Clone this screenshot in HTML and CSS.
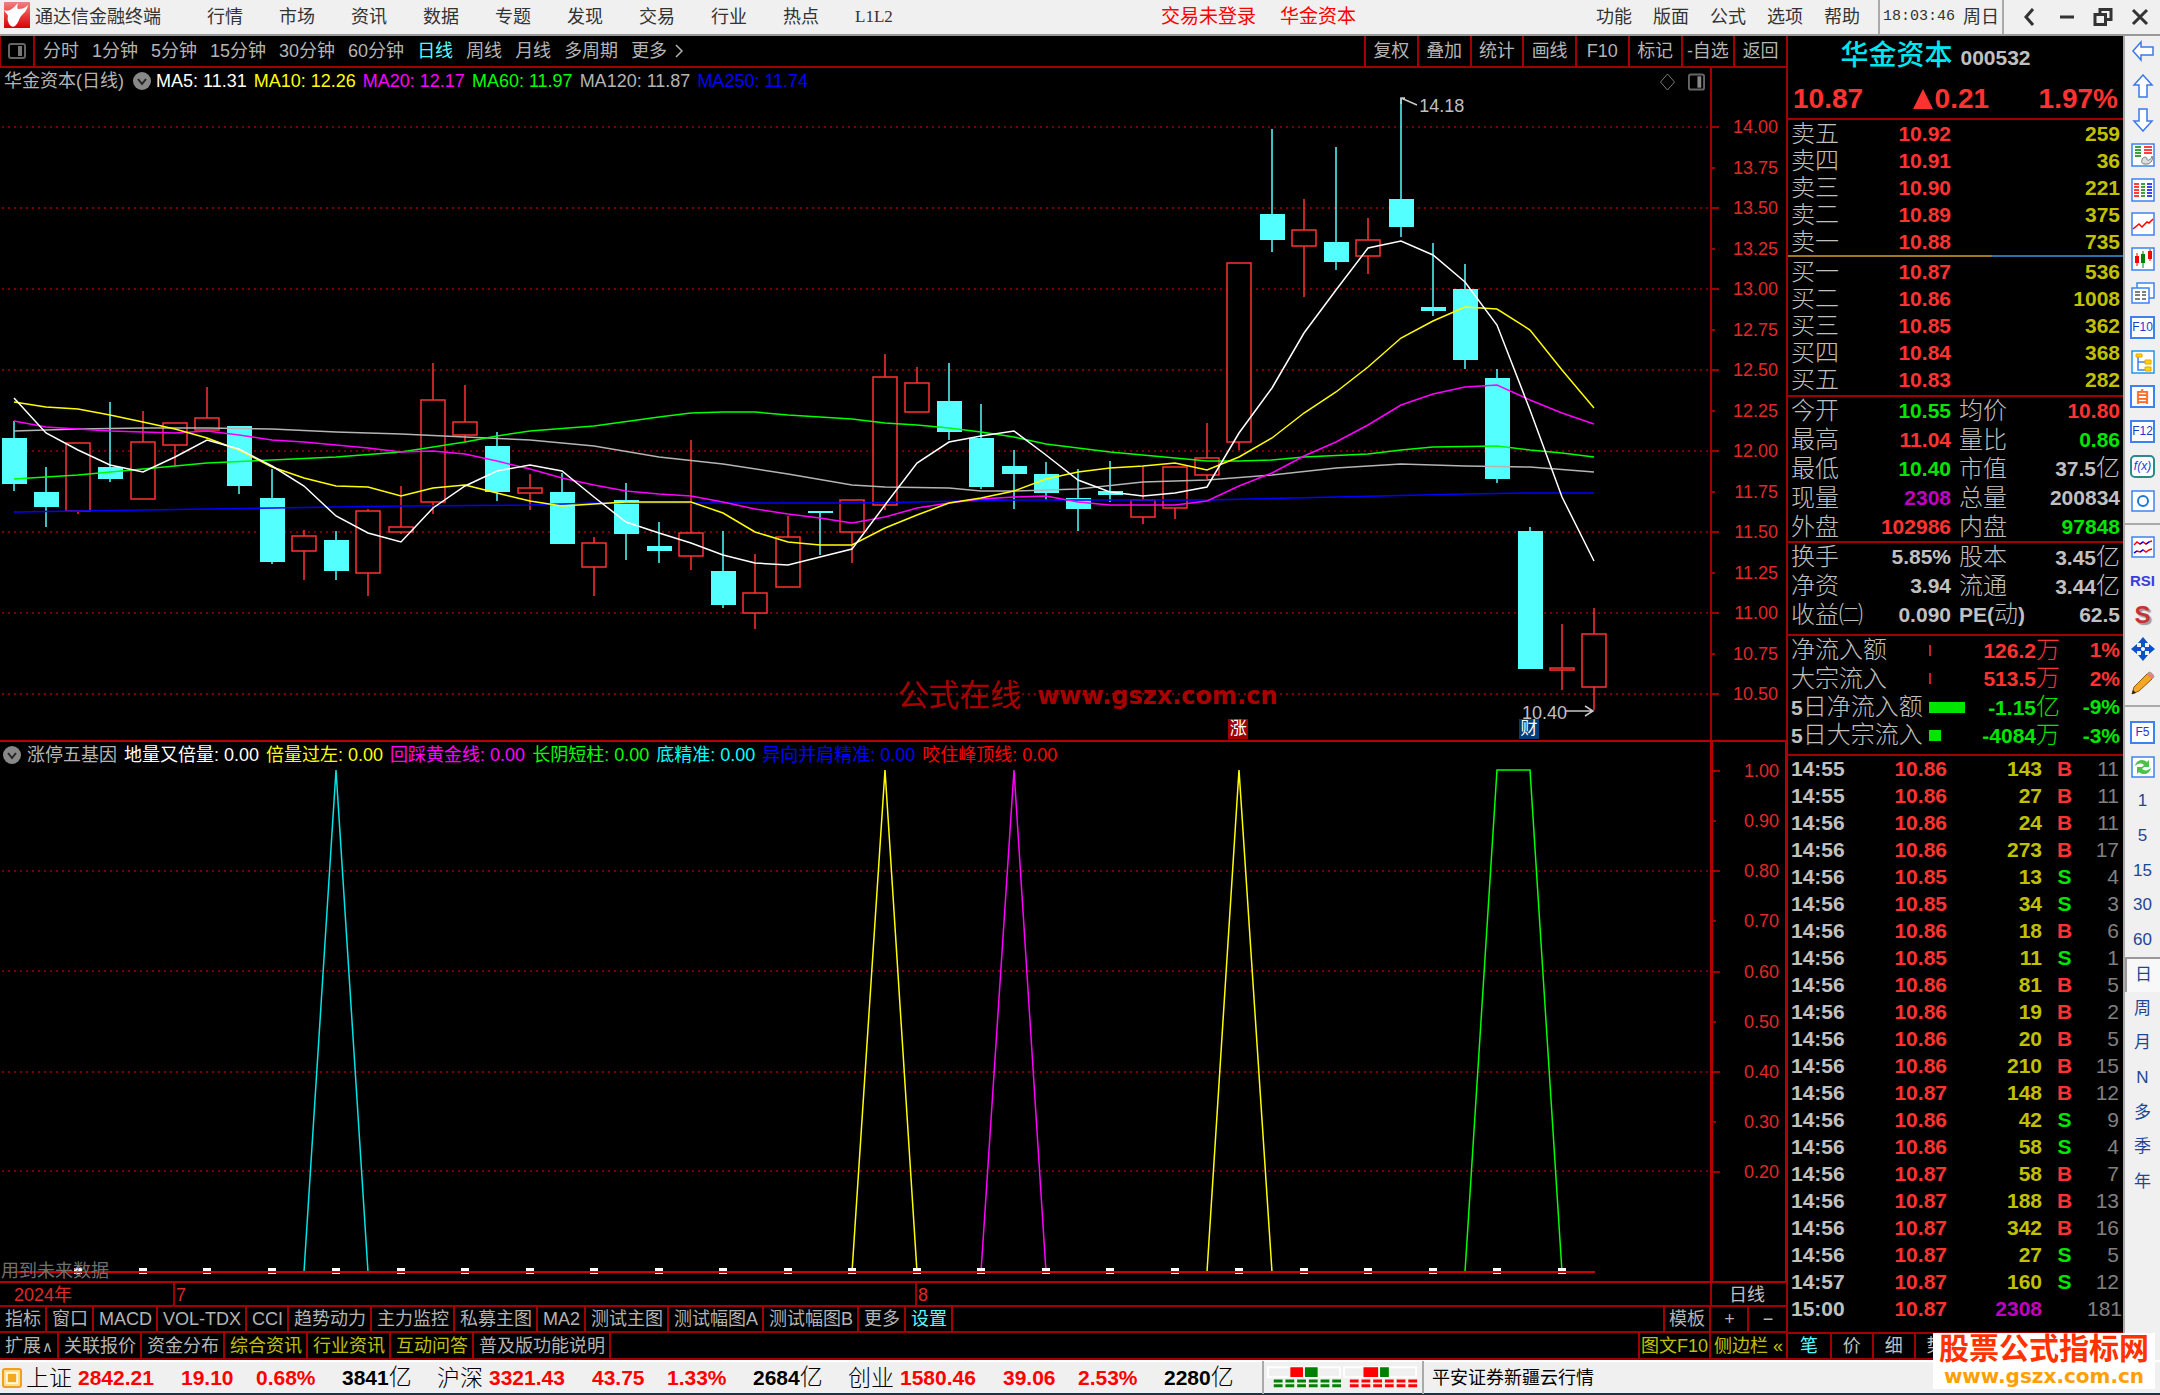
FILE: index.html
```html
<!DOCTYPE html>
<html lang="zh-CN">
<head>
<meta charset="utf-8">
<title>通达信金融终端</title>
<link rel="stylesheet" href="styles.css">
</head>
<body>
<header class="menubar">
  <svg class="logo" viewBox="0 0 26 26"><defs><linearGradient id="lg" x1="0" y1="0" x2="0" y2="1"><stop offset="0" stop-color="#f08080"/><stop offset=".5" stop-color="#e84040"/><stop offset="1" stop-color="#d80000"/></linearGradient></defs><rect width="26" height="26" fill="url(#lg)"/><path d="M0 8c4 2 8 0 14-7-1 4-1 6 1 6 3 0 6-1 9-4-1 6-4 8-7 11-2 3-3 8-6 10-3 2-6-1-7-5-1-3 1-5-1-7-1-1-2-2-3-4z" fill="#fff"/></svg>
  <h1 class="brand">通达信金融终端</h1>
  <nav class="menu">
    <a href="#">行情</a><a href="#">市场</a><a href="#">资讯</a><a href="#">数据</a><a href="#">专题</a><a href="#">发现</a><a href="#">交易</a><a href="#">行业</a><a href="#">热点</a><a href="#" class="serif">L1L2</a>
  </nav>
  <div class="notice"><a href="#">交易未登录</a><a href="#">华金资本</a></div>
  <nav class="menu menu-right"><a href="#">功能</a><a href="#">版面</a><a href="#">公式</a><a href="#">选项</a><a href="#">帮助</a></nav>
  <div class="clock"><time>18:03:46</time><span>周日</span></div>
  <div class="winbtns">
    <button aria-label="后退"><svg viewBox="0 0 20 20"><path d="M13 2L6 10l7 8" fill="none" stroke="#333" stroke-width="3"/></svg></button>
    <button aria-label="最小化"><svg viewBox="0 0 20 20"><path d="M3 10h14" stroke="#333" stroke-width="3"/></svg></button>
    <button aria-label="还原"><svg viewBox="0 0 20 20"><path d="M2 7.500h10.500v10H2zM7 7V2.500h11v10h-5" fill="none" stroke="#333" stroke-width="3"/></svg></button>
    <button aria-label="关闭"><svg viewBox="0 0 20 20"><path d="M3 3l14 14M17 3L3 17" stroke="#333" stroke-width="3"/></svg></button>
  </div>
</header>

<main class="workspace">
  <section class="charts">
    <div class="toolbar">
      <button class="panel-btn" aria-label="面板"><svg viewBox="0 0 18 16"><rect x="1" y="1" width="16" height="14" rx="2" fill="none" stroke="#666" stroke-width="2"/><rect x="10" y="3" width="4" height="10" fill="#777"/></svg></button>
      <div class="periods">
        <button>分时</button><button>1分钟</button><button>5分钟</button><button>15分钟</button><button>30分钟</button><button>60分钟</button><button class="on">日线</button><button>周线</button><button>月线</button><button>多周期</button><button class="more">更多<svg viewBox="0 0 8 14"><path d="M1 1l6 6-6 6" fill="none" stroke="#b4b4b4" stroke-width="1.500"/></svg></button>
      </div>
      <div class="tools"><button>复权</button><button>叠加</button><button>统计</button><button>画线</button><button>F10</button><button>标记</button><button>-自选</button><button>返回</button></div>
    </div>

    <div class="pane price-pane">
      <div class="plot">
        <svg class="canvas" id="price-plot" viewBox="0 68 1710 672" preserveAspectRatio="none"></svg>
        <div class="legend">
          <span class="c-gray">华金资本(日线)</span>
          <svg class="drop" viewBox="0 0 18 18"><circle cx="9" cy="9" r="9" fill="#888"/><path d="M5 7l4 5 4-5" fill="none" stroke="#222" stroke-width="2"/></svg>
          <span class="c-white">MA5: 11.31</span><span class="c-yellow">MA10: 12.26</span><span class="c-magenta">MA20: 12.17</span><span class="c-green">MA60: 11.97</span><span class="c-gray">MA120: 11.87</span><span class="c-blue">MA250: 11.74</span>
        </div>
        <div class="corner">
          <svg viewBox="0 0 16 18"><path d="M8 1l7 8-7 8-7-8z" fill="none" stroke="#777"/></svg>
          <svg viewBox="0 0 18 18"><rect x="1" y="1" width="16" height="16" rx="2" fill="none" stroke="#666" stroke-width="2"/><rect x="10" y="3" width="4" height="12" fill="#888"/></svg>
        </div>
        <span class="mark mark-high">14.18</span>
        <span class="mark mark-low">10.40</span>
        <span class="tag tag-rise">涨</span>
        <span class="tag tag-fin">财</span>
        <div class="site"><span>公式在线</span><b>www.gszx.com.cn</b></div>
      </div>
      <ol class="axis">
        <li>14.00</li><li>13.75</li><li>13.50</li><li>13.25</li><li>13.00</li><li>12.75</li><li>12.50</li><li>12.25</li><li>12.00</li><li>11.75</li><li>11.50</li><li>11.25</li><li>11.00</li><li>10.75</li><li>10.50</li>
      </ol>
    </div>

    <div class="pane sub-pane">
      <div class="plot">
        <svg class="canvas" id="sub-plot" viewBox="0 742 1710 539" preserveAspectRatio="none"></svg>
        <div class="legend sub-legend">
          <svg class="drop" viewBox="0 0 18 18"><circle cx="9" cy="9" r="9" fill="#888"/><path d="M5 7l4 5 4-5" fill="none" stroke="#222" stroke-width="2"/></svg>
          <span class="c-gray">涨停五基因</span><span class="c-white">地量又倍量: 0.00</span><span class="c-yellow">倍量过左: 0.00</span><span class="c-magenta">回踩黄金线: 0.00</span><span class="c-green">长阴短柱: 0.00</span><span class="c-cyan">底精准: 0.00</span><span class="c-blue">异向并肩精准: 0.00</span><span class="c-red">咬住峰顶线: 0.00</span>
        </div>
        <span class="future">用到未来数据</span>
      </div>
      <ol class="axis sub-axis">
        <li>1.00</li><li>0.90</li><li>0.80</li><li>0.70</li><li>0.60</li><li>0.50</li><li>0.40</li><li>0.30</li><li>0.20</li>
      </ol>
    </div>

    <div class="dates">
      <span class="d-year">2024年</span><span class="d-jul">7</span><span class="d-aug">8</span><span class="d-type">日线</span>
    </div>
    <div class="tabs">
      <button>指标</button><button>窗口</button><button>MACD</button><button>VOL-TDX</button><button>CCI</button><button>趋势动力</button><button>主力监控</button><button>私募主图</button><button>MA2</button><button>测试主图</button><button>测试幅图A</button><button>测试幅图B</button><button>更多</button><button class="on">设置</button>
      <button class="tail">模板</button><button class="zoom">+</button><button class="zoom last">−</button>
    </div>
    <div class="tabs tabs2">
      <button>扩展<small>∧</small></button><button>关联报价</button><button>资金分布</button><button class="hot">综合资讯</button><button class="hot">行业资讯</button><button class="hot">互动问答</button><button>普及版功能说明</button>
      <button class="tail hot f10">图文F10</button><button class="hot side-toggle">侧边栏&nbsp;«</button>
    </div>
  </section>

  <aside class="quote">
    <div class="q-head">
      <h2><b>华金资本</b><span>000532</span></h2>
      <p><span>10.87</span><span class="delta"><svg viewBox="0 0 20 20"><path d="M10 0l10 20H0z" fill="#ff3232"/></svg>0.21</span><span>1.97%</span></p>
    </div>
    <table class="book asks">
      <tr><th>卖五</th><td class="r">10.92</td><td>259</td></tr>
      <tr><th>卖四</th><td class="r">10.91</td><td>36</td></tr>
      <tr><th>卖三</th><td class="r">10.90</td><td>221</td></tr>
      <tr><th>卖二</th><td class="r">10.89</td><td>375</td></tr>
      <tr><th>卖一</th><td class="r">10.88</td><td>735</td></tr>
    </table>
    <div class="ratio"></div>
    <table class="book bids">
      <tr><th>买一</th><td class="r">10.87</td><td>536</td></tr>
      <tr><th>买二</th><td class="r">10.86</td><td>1008</td></tr>
      <tr><th>买三</th><td class="r">10.85</td><td>362</td></tr>
      <tr><th>买四</th><td class="r">10.84</td><td>368</td></tr>
      <tr><th>买五</th><td class="r">10.83</td><td>282</td></tr>
    </table>
    <table class="facts">
      <tr><th>今开</th><td class="g">10.55</td><th>均价</th><td class="r">10.80</td></tr>
      <tr><th>最高</th><td class="r">11.04</td><th>量比</th><td class="g">0.86</td></tr>
      <tr><th>最低</th><td class="g">10.40</td><th>市值</th><td>37.5<i>亿</i></td></tr>
      <tr><th>现量</th><td class="m">2308</td><th>总量</th><td>200834</td></tr>
      <tr><th>外盘</th><td class="r">102986</td><th>内盘</th><td class="g">97848</td></tr>
    </table>
    <table class="facts facts2">
      <tr><th>换手</th><td>5.85%</td><th>股本</th><td>3.45<i>亿</i></td></tr>
      <tr><th>净资</th><td>3.94</td><th>流通</th><td>3.44<i>亿</i></td></tr>
      <tr><th>收益㈡</th><td>0.090</td><th><b>PE(</b>动<b>)</b></th><td>62.5</td></tr>
    </table>
    <table class="flow">
      <tr><th>净流入额</th><td class="bar"><span class="thin"></span></td><td class="r">126.2<i>万</i></td><td class="r">1%</td></tr>
      <tr><th>大宗流入</th><td class="bar"><span class="thin"></span></td><td class="r">513.5<i>万</i></td><td class="r">2%</td></tr>
      <tr><th><b>5</b>日净流入额</th><td class="bar"><span class="wide"></span></td><td class="g">-1.15<i>亿</i></td><td class="g">-9%</td></tr>
      <tr><th><b>5</b>日大宗流入</th><td class="bar"><span class="mid"></span></td><td class="g">-4084<i>万</i></td><td class="g">-3%</td></tr>
    </table>
    <table class="trades"><tbody id="trades"></tbody></table>
    <div class="q-tabs"><button class="on">笔</button><button>价</button><button>细</button><button>势</button><button></button><button></button><button></button><button></button></div>
  </aside>

  <nav class="rail">
    <div class="rail-group g14">
      <button aria-label="左"><svg viewBox="0 0 24 24"><path d="M2 12l8-9v5h12v8H10v5z" fill="#fff" stroke="#3c78e6" stroke-width="1.500"/></svg></button>
      <button aria-label="上"><svg viewBox="0 0 24 24"><path d="M12 1l9 10h-5v12H8V11H3z" fill="#fff" stroke="#3c78e6" stroke-width="1.500"/></svg></button>
      <button aria-label="下"><svg viewBox="0 0 24 24"><path d="M12 23l9-10h-5V1H8v12H3z" fill="#fff" stroke="#3c78e6" stroke-width="1.500"/></svg></button>
      <button aria-label="报价"><svg viewBox="0 0 24 24"><path d="M1 1h22v22H1z" fill="#fff" stroke="#3c82f0" stroke-width="1.500"/><path d="M4 4h6M4 7h6M4 10h6M4 13h6" stroke="#008000" stroke-width="1.500"/><path d="M13 4h8M13 7h8M13 10h8" stroke="#f00" stroke-width="1.500"/><path d="M11 17c0-3 5-4 5-1s5 0 5-3c2 5-3 9-7 8-3 0-4-2-3-4z" fill="#ddd" stroke="#777"/></svg></button>
      <button aria-label="列表"><svg viewBox="0 0 24 24"><path d="M1 1h22v22H1z" fill="#fff" stroke="#3c82f0" stroke-width="1.500"/><path d="M3 6h5M3 9h5M3 12h5M3 15h5M3 18h5" stroke="#f00" stroke-width="1.500"/><path d="M10 6h4M10 9h4M10 12h4M10 15h4M10 18h4" stroke="#008000" stroke-width="1.500"/><path d="M16 6h5M16 9h5M16 12h5M16 15h5M16 18h5" stroke="#00f" stroke-width="1.500"/></svg></button>
      <button aria-label="走势"><svg viewBox="0 0 24 24"><path d="M1 1h22v22H1z" fill="#fff" stroke="#3c82f0" stroke-width="1.500"/><path d="M2 17l6-5 3 3 5-5 2 1 4-4" fill="none" stroke="#f00" stroke-width="1.500"/></svg></button>
      <button aria-label="K线"><svg viewBox="0 0 24 24"><path d="M1 1h22v22H1z" fill="#fff" stroke="#3c82f0" stroke-width="1.500"/><path d="M4 9h4v7H4zM17 4h4v8h-4z" fill="#f00"/><path d="M10 7h4v9h-4z" fill="#008000"/><path d="M6 6v13M19 2v12" stroke="#f00"/><path d="M12 4v17" stroke="#008000"/></svg></button>
      <button aria-label="多窗"><svg viewBox="0 0 24 24"><path d="M6 2h17v15H6z" fill="#fff" stroke="#3c82f0" stroke-width="1.500"/><path d="M1 7h17v15H1z" fill="#fff" stroke="#3c82f0" stroke-width="1.500"/><path d="M4 11h5M11 11h4M4 14h5M11 14h4M4 18h5M11 18h4" stroke="#555" stroke-width="1.500"/></svg></button>
      <button><span class="key">F10</span></button>
      <button aria-label="树"><svg viewBox="0 0 24 24"><path d="M1 1h22v22H1z" fill="#fff" stroke="#1e96e6" stroke-width="1.500"/><path d="M7 7v13h7M7 12h7" fill="none" stroke="#3c82f0" stroke-width="1.500"/><path d="M5 4h6v3H5zM14 10h6v4h-6zM14 17h6v4h-6z" fill="#ffd700" stroke="#f0a000"/></svg></button>
      <button><span class="key self">自</span></button>
      <button><span class="key">F12</span></button>
      <button><span class="key fx">f(x)</span></button>
      <button aria-label="圆"><svg viewBox="0 0 24 24"><path d="M1 2h22v20H1z" fill="#fff" stroke="#3c82f0" stroke-width="1.500"/><circle cx="12" cy="12" r="5" fill="none" stroke="#1e78dc" stroke-width="2"/></svg></button>
    </div>
    <div class="rail-group g5">
      <button aria-label="指标"><svg viewBox="0 0 24 24"><path d="M1 2h22v20H1z" fill="#fff" stroke="#3c82f0" stroke-width="1.500"/><path d="M3 10l3-3 3 2 3-2 3 2 3-2 3-1M3 18l3-2 3 1 3-2 3 2 3-2 3-1" fill="none" stroke="#f00" stroke-width="1.500"/><path d="M9 9l3-2M15 9l3-2M9 17l3-2M3 18l3-2" stroke="#00f" stroke-width="1.500"/></svg></button>
      <button><span class="rsi">RSI</span></button>
      <button><span class="dollar">S</span></button>
      <button aria-label="移动"><svg viewBox="0 0 24 24"><path d="M12 0l5 6h-3v4h4V7l6 5-6 5v-3h-4v4h3l-5 6-5-6h3v-4H6v3l-6-5 6-5v3h4V6H7z" fill="#0a50c8"/><circle cx="12" cy="12" r="2" fill="#fff"/></svg></button>
      <button aria-label="画笔"><svg viewBox="0 0 24 24"><path d="M1 23l2-7L16 3l5 5L8 20z" fill="#f5a623" stroke="#8a5a10"/><path d="M1 23l1-4 3 3z" fill="#222"/><path d="M16 3l2-2c2 0 5 3 5 5l-2 2z" fill="#f08080" stroke="#999"/></svg></button>
    </div>
    <div class="rail-group g14 last-group">
      <button><span class="key">F5</span></button>
      <button aria-label="刷新"><svg viewBox="0 0 24 24"><path d="M1 2h22v20H1z" fill="#fff" stroke="#3c82f0" stroke-width="1.500"/><path d="M4 11c1-6 8-8 12-4l2-2v7h-7l2-2c-3-2-5-2-9 1zM20 13c-1 6-8 8-12 4l-2 2v-7h7l-2 2c3 2 5 2 9-1z" fill="#4cc24c"/></svg></button>
      <button>1</button><button>5</button><button>15</button><button>30</button><button>60</button><button class="pressed">日</button><button>周</button><button>月</button><button>N</button><button>多</button><button>季</button><button>年</button>
    </div>
  </nav>
</main>

<footer class="status">
  <svg class="coin" viewBox="0 0 20 20"><rect x="1" y="1" width="18" height="18" rx="2" fill="#ffe08c" stroke="#f0a01e" stroke-width="2"/><rect x="5" y="5" width="10" height="10" fill="#f5a81e" stroke="#fff" stroke-width="1.500"/></svg>
  <dl class="index"><dt>上证</dt><dd>2842.21</dd><dd>19.10</dd><dd>0.68%</dd><dd class="amt">3841<i>亿</i></dd></dl>
  <dl class="index"><dt>沪深</dt><dd>3321.43</dd><dd>43.75</dd><dd>1.33%</dd><dd class="amt">2684<i>亿</i></dd></dl>
  <dl class="index"><dt>创业</dt><dd>1580.46</dd><dd>39.06</dd><dd>2.53%</dd><dd class="amt">2280<i>亿</i></dd></dl>
  <svg class="meter" viewBox="0 0 162 33"><path d="M4 6h74v10H4zM82 6h74v10H82z" fill="#f0f0f0" stroke="#fff" stroke-width="2"/><path d="M27 6h13v10H27zM102 6h15v10h-15z" fill="#f00"/><path d="M42 6h13v10H42zM119 6h9v10h-9z" fill="#008000"/><path d="M10 20h70M10 25h70" stroke="#008000" stroke-width="3" stroke-dasharray="9 3"/><path d="M88 20h70M88 25h70" stroke="#f00" stroke-width="3" stroke-dasharray="9 3"/></svg>
  <span class="server">平安证券新疆云行情</span>
</footer>
<div class="stamp"><strong>股票公式指标网</strong><span>www.gszx.com.cn</span></div>
<script src="script.js"></script>
</body>
</html>
```
FILE: styles.css
```css
* { box-sizing: border-box; }
body {
  margin: 0;
  min-height: 100vh;
  display: flex;
  flex-direction: column;
  position: relative;
  background: #000;
  color: #c0c0c0;
  font: 18px/20px "Liberation Sans", "Noto Sans CJK SC", sans-serif;
  white-space: nowrap;
}
button { margin: 0; padding: 0; border: 0; background: none; color: inherit; font: inherit; white-space: nowrap; }
a { color: inherit; text-decoration: none; }
ol, dl, dd, h1, h2, p { margin: 0; padding: 0; list-style: none; font: inherit; }
table { border-collapse: collapse; width: 100%; table-layout: fixed; }
th, td { padding: 0; }
i { font-style: normal; font-weight: 300; font-size: 24px; }

/* menu bar */
.menubar { flex: none; height: 36px; display: flex; align-items: center; background: #f0f0f0; color: #333; border-bottom: 2px solid #999; }
.logo { width: 26px; height: 26px; margin: 0 5px 4px 4px; }
.brand { width: 172px; }
.menu { display: flex; gap: 36px; }
.serif { font-family: "Liberation Serif", serif; font-size: 17px; }
.notice { display: flex; gap: 24px; color: #f00; margin: 0 auto; padding-left: 28px; font-size: 19px; }
.menu-right { gap: 21px; }
.clock { align-self: stretch; display: flex; align-items: center; gap: 8px; width: 126px; margin-left: 18px; padding-left: 3px; border-left: 2px solid #aaa; border-right: 2px solid #aaa; }
.clock time { font: 15px/20px "Liberation Mono", monospace; }
.winbtns { display: grid; grid-template-columns: repeat(4, 1fr); width: 156px; padding: 0 2px 0 8px; }
.winbtns button { display: grid; place-items: center; }
.winbtns svg { width: 20px; height: 20px; }

/* workspace */
.workspace { flex: 1; display: grid; grid-template-columns: minmax(0, 1fr) 335px 37px; }
.charts { display: flex; flex-direction: column; }
.toolbar { flex: none; height: 32px; display: flex; align-items: stretch; border-bottom: 2px solid #a00000; }
.panel-btn { width: 35px; border: solid #a00000; border-width: 0 2px 0 1px; display: grid; place-items: center; }
.panel-btn svg { width: 18px; height: 16px; }
.periods { display: flex; gap: 13px; padding-left: 8px; flex: 1; color: #b4b4b4; }
.periods .on, .tabs .on, .q-tabs .on { color: #54ffff; }
.more { display: flex; align-items: center; gap: 8px; }
.more svg { width: 8px; height: 14px; }
.tools { display: grid; grid-template-columns: repeat(8, 1fr); width: 424px; color: #b4b4b4; border-right: 2px solid #a00000; }
.tools button { border-left: 2px solid #a00000; }

.pane { display: grid; grid-template-columns: minmax(0, 1fr) 78px; min-height: 300px; }
.price-pane { flex: 672 1 0; }
.sub-pane { flex: 539 1 0; border-top: 2px solid #b40000; border-bottom: 2px solid #b40000; }
.plot { position: relative; }
.canvas { position: absolute; inset: 0; width: 100%; height: 100%; }
.legend { position: absolute; left: 4px; top: 3px; display: flex; align-items: center; gap: 7px; }
.legend .drop { width: 18px; height: 18px; margin: 0 -2px 0 2px; }
.sub-legend { left: 3px; top: 3px; gap: 7px; }
.sub-legend .drop { margin: 0 -1px 0 0; }
.corner { position: absolute; right: 5px; top: 5px; display: flex; gap: 12px; }
.corner svg { height: 18px; width: 17px; }
.axis { display: flex; flex-direction: column; justify-content: space-between; padding: 49px 8px 36px 0; border-left: 2px solid #a00000; border-right: 2px solid #a00000; color: #e02828; }
.axis li { display: flex; align-items: center; justify-content: space-between; }
.axis li::before { content: ""; width: 7px; height: 2px; background: #a00000; }
.axis li:nth-child(even)::before { width: 3px; }
.sub-axis { padding: 19px 6px 99px 0; border-color: #b40000; border-width: 3px; border-style: none solid; }
.mark { position: absolute; }
.mark-high { left: 83%; top: 28px; }
.mark-low { left: 89%; bottom: 17px; }
.tag { position: absolute; bottom: 1px; width: 20px; height: 20px; color: #fff; font-size: 17px; text-align: center; }
.tag-rise { left: 72%; margin-left: -3px; background: #a00000; }
.tag-fin { left: 89%; margin-left: -3px; background: #003c78; }
.site { position: absolute; left: 52%; bottom: 26px; display: flex; align-items: center; gap: 16px; margin-left: 8px; color: #a80000; font-size: 31px; line-height: 36px; }
.site b { font: bold 24px/36px "DejaVu Sans", sans-serif; }
.future { position: absolute; left: 1px; bottom: 0; color: #707070; }

.c-gray { color: #b4b4b4; } .c-white { color: #fff; } .c-yellow { color: #ff0; } .c-magenta { color: #f0f; }
.c-green { color: #0f0; } .c-cyan { color: #0ff; } .c-blue { color: #00f; } .c-red { color: #f00; }

.dates { flex: none; height: 24px; display: flex; line-height: 24px; border-bottom: 2px solid #a00000; color: #e02828; }
.d-year { width: 173px; padding-left: 14px; }
.d-jul, .d-aug { border-left: 2px solid #a00000; width: 742px; padding-left: 1px; }
.d-aug { flex: 1; }
.d-type { width: 78px; padding: 0 17px; border-left: 2px solid #a00000; border-right: 2px solid #a00000; color: #c0c0c0; }
.tabs { flex: none; height: 26px; display: flex; line-height: 24px; border-bottom: 2px solid #a00000; color: #b4b4b4; }
.tabs button { border-right: 2px solid #a00000; padding: 0 4px 0 5px; }
.tabs small { font: 15px/20px "DejaVu Sans", sans-serif; padding-left: 1px; }
.tabs .tail { margin-left: auto; border-left: 2px solid #a00000; padding: 0 4px; }
.tabs .zoom { width: 38px; }
.tabs .last { width: 39px; }
.tabs2 { height: 27px; line-height: 26px; }
.tabs .hot { color: #c0c000; }
.tabs .f10 { padding: 0 1px; }
.tabs .side-toggle { width: 77px; padding: 0; }

/* quote panel */
.quote { display: flex; flex-direction: column; font-size: 21px; font-weight: bold; }
.quote th { font-size: 24px; font-weight: 300; text-align: left; padding-left: 3px; }
.quote th b { font-size: 21px; font-weight: 700; }
.quote td { text-align: right; padding-right: 3px; }
.quote tr { height: 27px; line-height: 26px; }
.q-head { height: 82px; padding: 0 5px; }
.q-head h2 { display: flex; justify-content: center; align-items: baseline; gap: 8px; line-height: 40px; padding-right: 40px; }
.q-head h2 b { color: #00e6f0; font-size: 28px; font-weight: 500; }
.q-head p { display: flex; justify-content: space-between; align-items: center; color: #ff3232; font-size: 28px; line-height: 42px; }
.delta { display: flex; align-items: center; gap: 2px; }
.delta svg { width: 20px; height: 20px; }
.book, .facts, .flow, .trades { border-top: 2px solid #a00000; }
.book td { color: #c0c000; }
.book td:nth-child(2) { padding-right: 0; width: 93px; }
.book th { width: 70px; }
.book th, .book td { padding-top: 2px; line-height: 24px; }
.asks { height: 137px; }
.bids { height: 136px; border-top: 0; margin-bottom: 2px; }
.ratio { height: 2px; background: linear-gradient(to right, #a07820 61%, #2870a8 61%); }
.facts { height: 146px; }
.facts th { width: 72px; }
.facts td:nth-child(2) { width: 91px; padding-right: 0; }
.facts th:nth-child(3) { padding-left: 8px; }
.facts2 { height: 88px; margin-bottom: 5px; }
.flow { height: 116px; margin-bottom: 4px; }
.flow th { width: 141px; }
.flow .bar { width: 37px; padding: 0; }
.bar span { display: block; height: 11px; background: #00e600; }
.bar .thin { width: 2px; background: #c82020; }
.bar .wide { width: 36px; }
.bar .mid { width: 12px; }
.flow td:nth-child(3) { width: 94px; padding-right: 0; }
.quote .r { color: #ff3232; } .quote .g { color: #00e600; } .quote .m { color: #c000c0; }
.quote .y { color: #c0c000; }
.trades { margin-bottom: auto; }
.trades td { padding-right: 0; }
.trades td:nth-child(1) { width: 57px; text-align: left; padding-left: 3px; }
.trades td:nth-child(2) { width: 102px; }
.trades td:nth-child(3) { width: 95px; }
.trades td:nth-child(4) { width: 45px; text-align: center; }
.trades td:nth-child(5) { color: #808080; font-weight: normal; padding-right: 4px; }
.q-tabs { height: 28px; display: grid; grid-template-columns: repeat(8, 1fr); border-top: 2px solid #a00000; border-bottom: 2px solid #a00000; font-size: 18px; font-weight: normal; line-height: 24px; }
.q-tabs button + button { border-left: 2px solid #a00000; }

/* icon rail */
.rail { background: #f0f0f0; border-left: 2px solid #aaa; color: #1e4696; font-size: 17px; }
.rail-group { display: grid; grid-auto-rows: 1fr; }
.g14 { height: 484px; margin-top: -2px; }
.g5 { height: 184px; margin-top: 5px; padding: 5px 0; border-top: 2px solid #aaa; border-bottom: 2px solid #aaa; }
.last-group { margin-top: 8px; }
.rail button { display: grid; place-items: center; }
.rail svg { width: 24px; height: 24px; }
.key { width: 25px; height: 23px; border: 2px solid #3c82f0; background: #fff; color: #1e3cc8; font-size: 12px; line-height: 19px; text-align: center; }
.self { color: #ff6a28; font-size: 15px; font-weight: bold; }
.fx { border-color: #2a8a8a; border-radius: 5px; font-style: italic; }
.rsi { color: #3c3cdc; font-size: 15px; font-weight: bold; }
.dollar { color: #c83232; font-size: 24px; font-weight: bold; text-shadow: 2px 2px 1px #999; }
.rail .pressed { background: #f8f8f8; border-top: 2px solid #999; border-left: 2px solid #999; }

/* status bar */
.status { flex: none; height: 35px; display: flex; align-items: center; background: #f0f0f0; color: #000; border-top: 2px solid #fff; border-bottom: 2px solid #1e3246; }
.coin { width: 20px; height: 20px; margin: 0 4px 0 2px; }
.index { display: grid; grid-template-columns: 52px 103px 75px 86px 95px; align-items: center; font-size: 21px; font-weight: bold; color: #f00; line-height: 28px; }
.index dt { font-size: 23px; font-weight: 300; color: #000; }
.amt { color: #000; }
.amt i { font-size: 23px; }
.meter { width: 162px; height: 33px; margin-left: 3px; border-left: 2px solid #aaa; border-right: 2px solid #aaa; }
.server { padding-left: 8px; }
.stamp { position: absolute; right: 5px; bottom: 6px; width: 222px; height: 56px; background: #fff; display: flex; flex-direction: column; align-items: center; }
.stamp strong { color: #ff3200; font-size: 30px; line-height: 32px; font-weight: bold; }
.stamp span { color: #ffa000; font: bold 20px/22px "DejaVu Sans", sans-serif; }
```
FILE: script.js
```js
const NS = 'http://www.w3.org/2000/svg';
const cx = i => Math.round(13.5 + 32.26 * i);

function add(svg, tag, attrs) {
  const el = document.createElementNS(NS, tag);
  for (const k in attrs) el.setAttribute(k, attrs[k]);
  svg.appendChild(el);
}
function grid(svg, rows) {
  rows.forEach(y => add(svg, 'path', { d: `M2 ${y}H1710`, stroke: '#780000', 'stroke-width': 2, 'stroke-dasharray': '2 4' }));
}
function line(svg, pts, color) {
  add(svg, 'polyline', { points: pts.map(p => cx(p[0]) + ',' + p[1]).join(' '), fill: 'none', stroke: color, 'stroke-width': 1.5 });
}

// each candle: direction (u/d), high, body top, body bottom, low, in plot units
const candles = [
  ['d',421,438,484,491],['d',467,492,507,527],['u',443,443,511,514],['d',402,467,479,482],['u',411,442,499,499],
  ['u',423,423,445,466],['u',387,418,430,430],['d',426,426,486,494],['d',469,498,562,564],['u',530,536,551,580],
  ['d',531,540,571,580],['u',509,511,573,596],['u',486,527,532,534],['u',363,400,502,514],['u',385,422,435,442],
  ['d',432,446,492,501],['u',474,488,493,510],['d',473,492,544,544],['u',537,543,567,596],['d',483,500,534,560],
  ['d',522,546,551,563],['u',440,533,556,570],['d',531,571,605,608],['u',554,593,613,629],['u',516,537,587,587],
  ['d',512,511,513,555],['u',500,500,532,563],['u',354,377,505,510],['u',367,383,412,412],['d',363,401,432,440],
  ['d',404,438,487,489],['d',450,466,474,509],['d',462,474,493,500],['d',469,498,509,531],['d',461,491,495,502],
  ['u',466,500,517,524],['u',467,467,508,519],['u',423,458,475,479],['u',263,263,442,450],['d',129,214,240,252],
  ['u',199,230,246,297],['d',147,242,262,270],['u',218,240,256,274],['d',98,199,227,237],['d',243,307,311,316],
  ['d',264,289,360,369],['d',369,378,479,483],['d',527,531,669,669],['u',624,668,670,690],['u',608,634,687,710]
];

const price = document.getElementById('price-plot');
grid(price, [127, 208, 289, 370, 451, 532, 613, 694]);
candles.forEach(([dir, hi, top, bot, lo], i) => {
  const x = cx(i), up = dir === 'u', color = up ? '#ff3232' : '#54ffff';
  add(price, 'path', { d: `M${x} ${hi}V${top}M${x} ${bot}V${lo}`, stroke: color, 'stroke-width': 1.5 });
  if (up) add(price, 'rect', { x: x - 12, y: top, width: 24, height: bot - top, fill: '#000', stroke: color, 'stroke-width': 1.5 });
  else add(price, 'rect', { x: x - 12, y: top, width: 25, height: bot - top, fill: color });
});
const seq = a => a.map((y, i) => [i, y]);
line(price, [[0,512],[4,510],[8,508],[12,506],[16,505],[18,503],[26,503],[28,502],[31,500],[37,500],[41,497],[45,494],[47,493],[49,493]], '#0000ff');
line(price, [[0,431],[2,429],[4,428],[6,428],[8,429],[10,432],[12,434],[14,437],[16,440],[18,446],[20,457],[22,464],[24,474],[26,485],[27,487],[29,488],[30,491],[31,491],[33,489],[35,482],[37,480],[39,475],[41,468],[43,464],[45,466],[47,467],[49,472]], '#b4b4b4');
line(price, [[0,479],[2,475],[4,469],[6,463],[8,460],[10,457],[12,452],[14,442],[15,436],[16,431],[18,426],[20,417],[21,413],[22,412],[23,412],[24,415],[25,417],[26,419],[27,423],[28,425],[29,428],[30,432],[31,437],[32,444],[34,452],[36,458],[37,461],[38,461],[39,460],[40,457],[42,454],[43,450],[44,447],[46,446],[47,450],[48,453],[49,457]], '#00ff00');
line(price, seq([421,427,429,431,432,433,431,435,440,442,445,448,452,451,454,461,469,478,485,491,494,496,502,509,514,518,523,517,508,503,499,497,496,502,505,505,505,501,486,473,456,442,425,405,394,387,385,400,413,424]), '#ff00ff');
line(price, seq([402,407,409,415,422,429,438,450,467,478,486,487,496,488,485,493,501,506,504,502,502,502,513,532,542,545,545,528,515,503,498,491,479,472,468,466,463,470,457,438,413,392,367,338,321,307,309,330,370,408]), '#ffff00');
line(price, seq([398,433,450,465,472,457,440,449,466,486,516,533,542,508,486,471,465,471,497,522,533,543,555,563,565,557,549,505,463,442,436,431,455,480,492,496,493,487,433,388,333,290,248,241,255,282,325,410,497,561]), '#ffffff');
add(price, 'path', { d: 'M1401 104V98h4M1401 98l16 7M1565 711h28M1585 706l8 5-8 5', fill: 'none', stroke: '#c8c8c8', 'stroke-width': 1.5 });

const sub = document.getElementById('sub-plot');
grid(sub, [871, 971, 1072, 1171]);
[[9,10,11,'#00e6e6'],[26,27,28,'#ffff00'],[30,31,32,'#ff00ff'],[37,38,39,'#ffff00']].forEach(([a, b, c, color]) =>
  line(sub, [[a,1272],[b,770],[c,1272]], color));
line(sub, [[45,1272],[46,770],[47,770],[48,1272]], '#00ff00');
for (let i = 2; i < 49; i += 2) add(sub, 'rect', { x: cx(i) - 4, y: 1268, width: 8, height: 6, fill: '#fff' });
add(sub, 'path', { d: 'M14 1272H1595', stroke: '#d00000', 'stroke-width': 2 });

const trades = [
  ['14:55','10.86',143,'B',11],['14:55','10.86',27,'B',11],['14:56','10.86',24,'B',11],['14:56','10.86',273,'B',17],
  ['14:56','10.85',13,'S',4],['14:56','10.85',34,'S',3],['14:56','10.86',18,'B',6],['14:56','10.85',11,'S',1],
  ['14:56','10.86',81,'B',5],['14:56','10.86',19,'B',2],['14:56','10.86',20,'B',5],['14:56','10.86',210,'B',15],
  ['14:56','10.87',148,'B',12],['14:56','10.86',42,'S',9],['14:56','10.86',58,'S',4],['14:56','10.87',58,'B',7],
  ['14:56','10.87',188,'B',13],['14:56','10.87',342,'B',16],['14:56','10.87',27,'S',5],['14:57','10.87',160,'S',12],
  ['15:00','10.87',2308,'',181]
];
document.getElementById('trades').innerHTML = trades.map(([t, p, v, s, n]) =>
  `<tr><td>${t}</td><td class="r">${p}</td><td class="${s ? 'y' : 'm'}">${v}</td><td class="${s === 'B' ? 'r' : 'g'}">${s}</td><td>${n}</td></tr>`).join('');
```
